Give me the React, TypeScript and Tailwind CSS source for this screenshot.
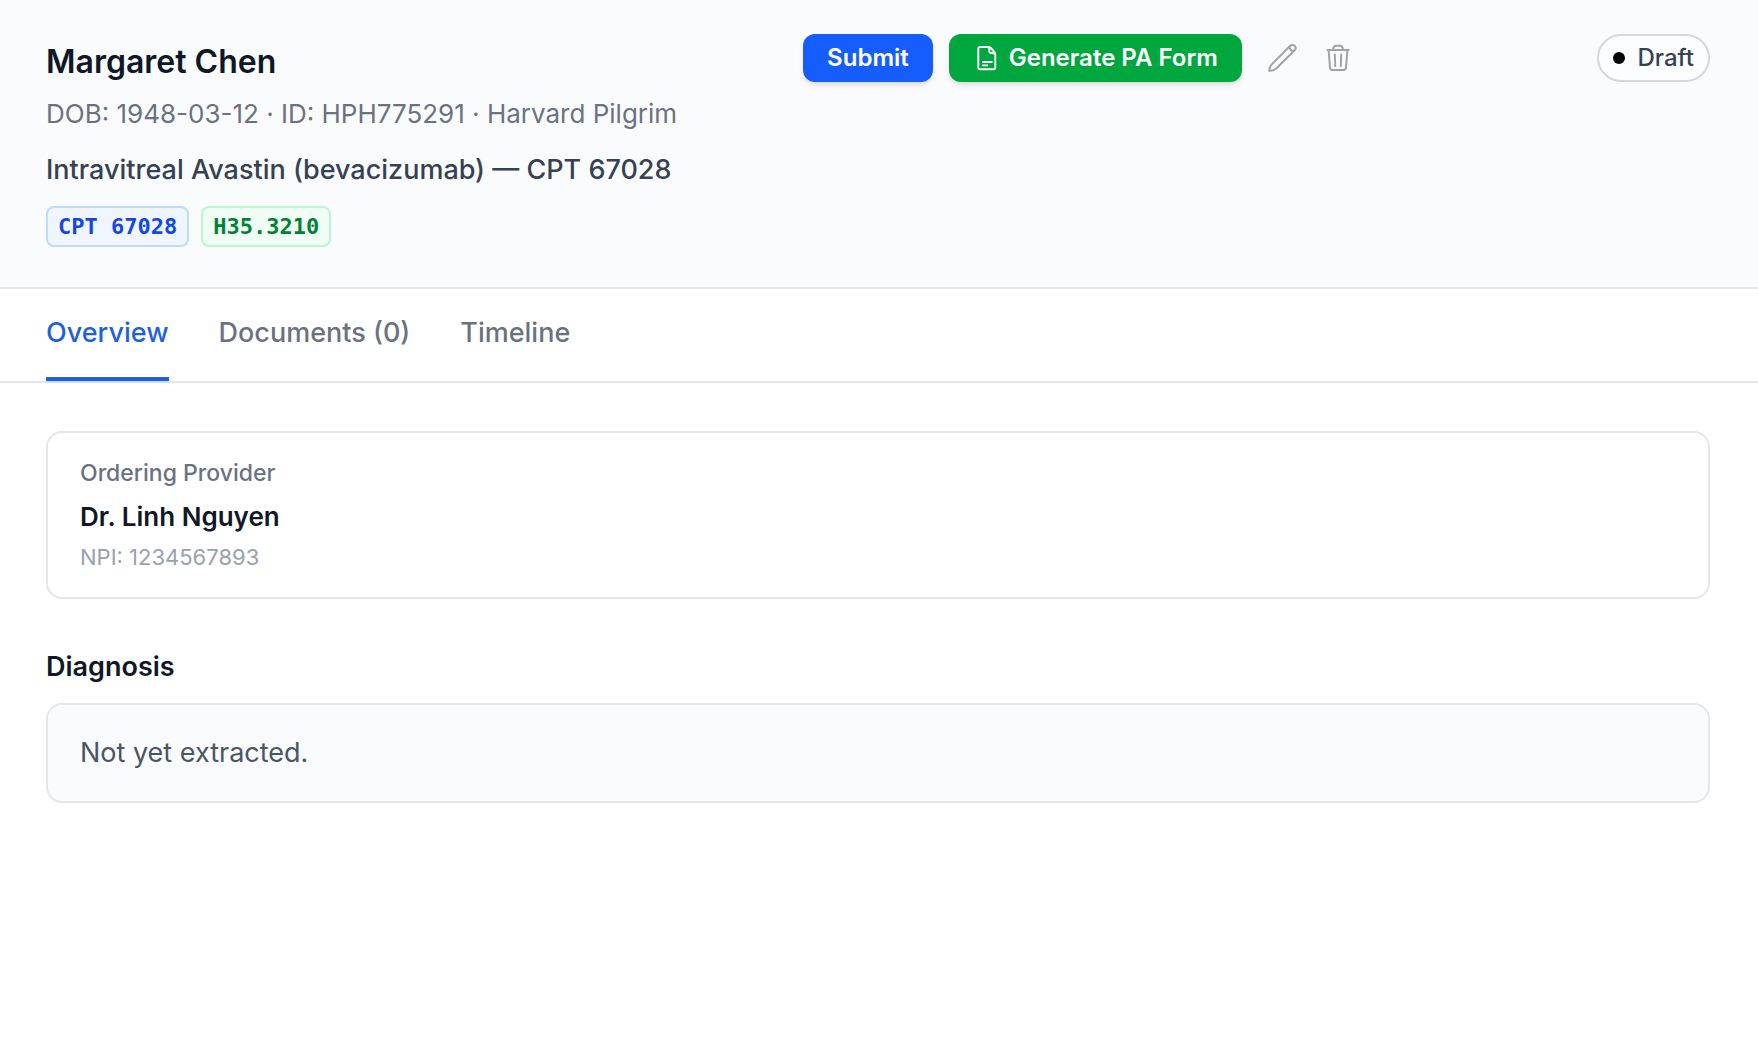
import { useState } from 'react';
import type { ReactNode } from 'react';
import clsx from 'clsx';

const TABS = [
  { id: 'overview', label: 'Overview' },
  { id: 'documents', label: 'Documents (0)' },
  { id: 'timeline', label: 'Timeline' },
];

function DocumentIcon() {
  return (
    <svg width="28" height="28" viewBox="0 0 28 28" fill="none" stroke="currentColor" strokeWidth="1.9" strokeLinecap="round" strokeLinejoin="round" aria-hidden="true">
      <path d="M15.8 3H6.8a1.5 1.5 0 0 0-1.5 1.5v19.2a1.5 1.5 0 0 0 1.5 1.5h14a1.5 1.5 0 0 0 1.5-1.5V10.2C22.3 8.6 17.6 3 15.8 3Z" />
      <path d="M15.6 3.2c.9.8.7 2.4.7 4.4a1.4 1.4 0 0 0 1.4 1.4c2 0 3.7-.1 4.4 1" />
      <path d="M9.8 18h9M9.8 21.4h4.4" />
    </svg>
  );
}

function PencilIcon() {
  return (
    <svg width="32" height="32" viewBox="0 0 32 32" fill="none" stroke="currentColor" strokeWidth="2" strokeLinecap="round" strokeLinejoin="round" aria-hidden="true">
      <path d="M3.2 28.8c.2-2.4 1-4.8 2.4-6.2L24.2 3.800a3.100 3.100 0 0 1 4.400 4.400L9.800 27c-1.600 1.200-4 1.800-6.600 1.800Z" />
      <path d="M23.600 4.600c-.6 2.400 1.600 4.800 4.300 4.200" />
    </svg>
  );
}

function TrashIcon() {
  return (
    <svg width="32" height="32" viewBox="0 0 32 32" fill="none" stroke="currentColor" strokeWidth="2" strokeLinecap="round" strokeLinejoin="round" aria-hidden="true">
      <path d="M5.4 8h21.200" />
      <path d="M11 8c.2-2.800 1.200-4.300 3.200-4.300h3.600c2 0 3 1.500 3.200 4.300" />
      <path d="M6.600 8l1.400 17.600A2.400 2.400 0 0 0 10.400 28h11.200a2.400 2.400 0 0 0 2.400-2.400L25.400 8" />
      <path d="M12.800 12.400l.4 11.600M19.200 12.400l-.4 11.600" />
    </svg>
  );
}

function IconButton({ label, children }: { label: string; children: ReactNode }) {
  return (
    <button type="button" aria-label={label} className="p-2 text-[#a1a3a8] hover:text-gray-600">
      {children}
    </button>
  );
}

function PatientHeader() {
  return (
    <header className="grid grid-cols-[45.5%_1fr] items-start border-b-2 border-[#e5e6e8] bg-[#fafbfd] pt-[34px] pr-12 pb-10 pl-[46px]">
      <div>
        <h1 className="text-[32px] leading-[56px] font-semibold text-gray-900">Margaret Chen</h1>
        <p className="mt-1 text-[26px] leading-10 text-gray-500">
          DOB: 1948-03-12 · ID: HPH775291 · Harvard Pilgrim
        </p>
        <p className="mt-4 text-[27px] leading-10 font-medium text-gray-700">
          Intravitreal Avastin (bevacizumab) — CPT 67028
        </p>

        {/* Codes */}
        <div className="mt-4 flex gap-3 font-['DejaVu_Sans_Mono',monospace] text-[22px] leading-[37px] font-bold">
          <span className="rounded-lg border-2 border-blue-200 bg-blue-50 px-2.5 text-blue-700">CPT 67028</span>
          <span className="rounded-lg border-2 border-green-200 bg-green-50 px-2.5 text-green-700">H35.3210</span>
        </div>
      </div>

      <div className="flex items-center justify-between">
        {/* Actions */}
        <div className="flex items-center gap-4 text-2xl font-semibold text-white">
          <button type="button" className="h-12 rounded-xl bg-blue-600 px-6 shadow-md hover:bg-blue-700">
            Submit
          </button>
          <button type="button" className="flex h-12 items-center gap-2 rounded-xl bg-green-600 px-6 shadow-md hover:bg-green-700">
            <DocumentIcon />
            Generate PA Form
          </button>
          <div className="flex gap-2">
            <IconButton label="Edit">
              <PencilIcon />
            </IconButton>
            <IconButton label="Delete">
              <TrashIcon />
            </IconButton>
          </div>
        </div>

        {/* Status */}
        <span className="flex h-12 items-center gap-3 rounded-full border-2 border-[#d6d7da] bg-[#fcfdfe] px-3.5 text-2xl font-medium text-gray-700">
          <span className="size-3 rounded-full bg-black" />
          Draft
        </span>
      </div>
    </header>
  );
}

export default function App() {
  const [active, setActive] = useState('overview');

  return (
    <div className="min-h-screen bg-white font-['Inter',sans-serif]">
      <PatientHeader />

      <nav className="flex gap-[50px] border-b-2 border-[#e5e6e8] pr-12 pl-[46px]">
        {TABS.map((tab) => (
          <button
            key={tab.id}
            type="button"
            onClick={() => setActive(tab.id)}
            className={clsx(
              'border-b-4 py-6 text-[27px] leading-10 font-medium',
              active === tab.id
                ? 'border-[#1f5fe6] text-[#1f5fe6] shadow-[0_2px_0_#cfdefb]'
                : 'border-transparent text-gray-500'
            )}
          >
            {tab.label}
          </button>
        ))}
      </nav>

      <main className="pt-12 pr-12 pb-12 pl-[46px]">
        <section className="rounded-2xl border-2 border-[#e5e6e8] px-8 py-6">
          <p className="text-[23px] leading-8 font-medium text-gray-500">Ordering Provider</p>
          <p className="mt-2 text-[26px] leading-10 font-semibold text-gray-900">Dr. Linh Nguyen</p>
          <p className="mt-1 text-[22px] leading-8 text-gray-400">NPI: 1234567893</p>
        </section>

        <section className="mt-12">
          <h2 className="text-[27px] leading-10 font-semibold text-gray-900">Diagnosis</h2>
          <div className="mt-4 rounded-2xl border-2 border-[#e5e6e8] bg-[#fafbfd] px-8 py-7">
            <p className="text-[27px] leading-10 text-gray-600">Not yet extracted.</p>
          </div>
        </section>
      </main>
    </div>
  );
}
